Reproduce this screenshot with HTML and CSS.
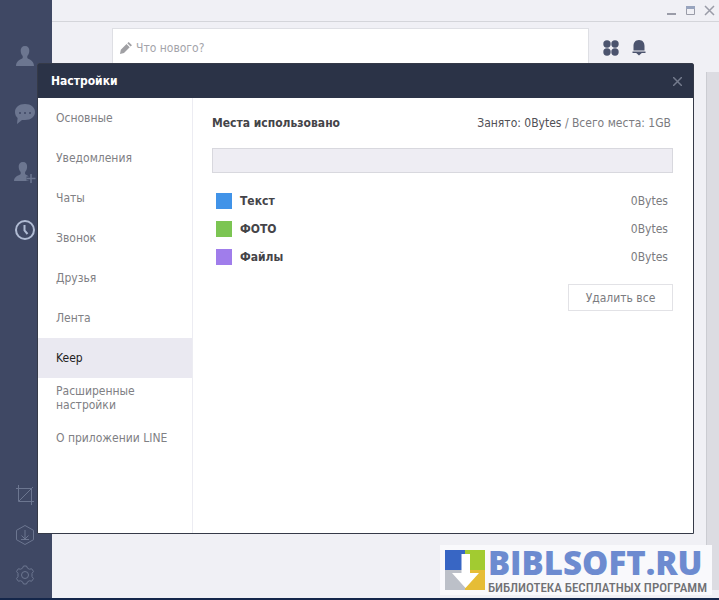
FILE: index.html
```html
<!DOCTYPE html>
<html lang="ru">
<head>
    <meta charset="UTF-8">
    <meta name="viewport" content="width=device-width, initial-scale=1.0">
    <title>Настройки</title>
    <link rel="stylesheet" href="styles.css">
</head>
<body>
    <div class="app">
        <nav class="sidebar">
            <div class="sidebar-top">
                <button class="side-button" aria-label="Друзья">
                    <svg width="20" height="22" viewBox="0 0 20 22"><path fill="currentColor" d="M10 1c3 0 4.500 2 4.300 5-.1 2-.9 4-2 5v2c1 1.300 6.700 2 6.700 8H1c0-6 5.700-6.700 6.700-8v-2c-1.100-1-1.900-3-2-5C5.500 3 7 1 10 1z"/></svg>
                </button>
                <button class="side-button" aria-label="Чаты">
                    <svg width="22" height="22" viewBox="0 0 22 22"><path fill="currentColor" d="M11 1c6 0 10 3.500 10 8s-4 8-10 8H8l-5 4 .6-6C2 13.500 1 11.500 1 9c0-4.500 4-8 10-8z"/><g fill="#3f4864"><circle cx="6" cy="10" r="1"/><circle cx="11" cy="10" r="1"/><circle cx="16" cy="10" r="1"/></g></svg>
                </button>
                <button class="side-button" aria-label="Добавить друзей">
                    <svg width="22" height="22" viewBox="0 0 22 22"><path fill="currentColor" d="M9 1c3 0 4.300 2 4.100 5-.1 2-.9 4-2 5v2c.5.800 2 1.300 3.400 2.200V20H0c0-5 5.700-5.700 6.700-7v-2c-1.100-1-1.900-3-2-5C4.500 3 6 1 9 1z"/><path d="M17 13v9M12.500 17.500h9" stroke="#3f4864" stroke-width="4"/><path d="M17 13v9M12.500 17.500h9" stroke="currentColor" stroke-width="1.500"/></svg>
                </button>
                <button class="side-button active" aria-label="Лента">
                    <svg width="22" height="22" viewBox="0 0 22 22" fill="none" stroke="currentColor" stroke-width="2"><circle cx="11" cy="11" r="9"/><path d="M10.500 6v5.500l3 3.500"/></svg>
                </button>
            </div>
            <div class="sidebar-bottom">
                <button class="side-button" aria-label="Снимок экрана">
                    <svg width="20" height="20" viewBox="0 0 20 20" fill="none" stroke="currentColor"><path d="M3.500 0v16.500H19M1 3.500h15.500V20M4 16L18 2"/></svg>
                </button>
                <button class="side-button" aria-label="Keep">
                    <svg width="20" height="22" viewBox="0 0 20 22" fill="none" stroke="currentColor"><path d="M10 1.500l8.500 4.800v9.400L10 20.500l-8.500-4.800V6.300zM10 6v9M6.500 11.500L10 15l3.500-3.500M6 15.500h8"/></svg>
                </button>
                <button class="side-button" aria-label="Настройки">
                    <svg width="20" height="20" viewBox="0 0 20 20" fill="none" stroke="currentColor"><path d="M7.500 3.200L8.500 1h3l1 2.200 1.800 1 2.400-.4 1.800 2.600-1.500 2v3.200l1.500 2-1.800 2.600-2.400-.4-1.800 1-1 2.200h-3l-1-2.200-1.800-1-2.400.4-1.800-2.600 1.500-2V8.400l-1.500-2 1.800-2.600 2.400.4z"/><circle cx="10" cy="10" r="3.500"/></svg>
                </button>
            </div>
        </nav>

        <main class="main">
            <div class="titlebar">
                <button class="window-button" aria-label="Свернуть">
                    <svg width="11" height="11" viewBox="0 0 11 11"><path d="M1 9h9" stroke="currentColor" stroke-width="2"/></svg>
                </button>
                <button class="window-button" aria-label="Развернуть">
                    <svg width="11" height="11" viewBox="0 0 11 11"><path d="M1.500 1.500h8v8h-8z" fill="none" stroke="currentColor"/><path fill="#98a4be" d="M1 1h9v3H1z"/></svg>
                </button>
                <button class="window-button" aria-label="Закрыть">
                    <svg width="11" height="11" viewBox="0 0 11 11"><path d="M1 1l9 9M10 1l-9 9" stroke="currentColor" stroke-width="1.500"/></svg>
                </button>
            </div>
            <div class="toolbar">
                <label class="post">
                    <svg width="13" height="14" viewBox="0 0 13 14"><path fill="#a0a0a4" d="M1 13l.8-4.200L7.500 3.100l3.200 3.200L5 12zM8.300 2.300L9.700 1 13 4.200l-1.500 1.400z"/></svg>
                    <input type="text" placeholder="Что нового?" aria-label="Что нового?">
                </label>
                <div class="toolbar-icons">
                    <button class="tool-button" aria-label="Меню">
                        <svg width="16" height="16" viewBox="0 0 16 16" fill="currentColor"><circle cx="4" cy="4" r="3.700"/><circle cx="12" cy="4" r="3.700"/><circle cx="4" cy="12" r="3.700"/><circle cx="12" cy="12" r="3.700"/></svg>
                    </button>
                    <button class="tool-button" aria-label="Уведомления">
                        <svg width="14" height="16" viewBox="0 0 14 16" fill="currentColor"><path d="M7 0c4 0 5.500 3 5.500 6v4.500h-11V6C1.500 3 3 0 7 0zM.5 11.500h13V13H9.800L7 15.500 4.200 13H.5z"/></svg>
                    </button>
                </div>
            </div>
            <div class="feed"></div>
        </main>

        <section class="dialog" role="dialog" aria-labelledby="dialog-title">
            <header class="dialog-header">
                <h1 id="dialog-title">Настройки</h1>
                <button class="dialog-close" aria-label="Закрыть">
                    <svg width="9" height="9" viewBox="0 0 9 9"><path d="M0 0l9 9M9 0L0 9" stroke="currentColor" stroke-width="1.500"/></svg>
                </button>
            </header>
            <div class="dialog-body">
                <nav class="menu">
                    <a href="#">Основные</a>
                    <a href="#">Уведомления</a>
                    <a href="#">Чаты</a>
                    <a href="#">Звонок</a>
                    <a href="#">Друзья</a>
                    <a href="#">Лента</a>
                    <a href="#" class="selected">Keep</a>
                    <a href="#">Расширенные настройки</a>
                    <a href="#">О приложении LINE</a>
                </nav>
                <div class="content">
                    <div class="usage">
                        <h2>Места использовано</h2>
                        <p><span class="used">Занято: 0Bytes</span> / Всего места: 1GB</p>
                    </div>
                    <progress class="bar" value="0" max="1" aria-label="Места использовано"></progress>
                    <ul class="legend">
                        <li><i class="swatch blue"></i><b>Текст</b><span>0Bytes</span></li>
                        <li><i class="swatch green"></i><b>ФОТО</b><span>0Bytes</span></li>
                        <li><i class="swatch purple"></i><b>Файлы</b><span>0Bytes</span></li>
                    </ul>
                    <button class="delete-all">Удалить все</button>
                </div>
            </div>
        </section>

        <div class="watermark">
            <svg width="40" height="40" viewBox="0 0 40 40"><path fill="#3866c4" d="M0 0h20v20H0z"/><path fill="#a2cb31" d="M20 0h20v20H20z"/><path fill="#bcc0c8" d="M0 20h20v20H0z"/><path fill="#e6bd36" d="M20 20h20v20H20z"/><path fill="#fff" d="M16.500 4h8.500v19h9L20.500 38 7 23h9.500z"/></svg>
            <div class="watermark-text">
                <span class="site">BIBLSOFT.RU</span>
                <span class="slogan">БИБЛИОТЕКА БЕСПЛАТНЫХ ПРОГРАММ</span>
            </div>
        </div>
    </div>
</body>
</html>
```

FILE: styles.css
```css
* {
    box-sizing: border-box;
}
body {
    margin: 0;
    font-family: "DejaVu Sans Condensed", "DejaVu Sans", sans-serif;
    font-size: 12px;
    line-height: 14px;
    color: #7b7b80;
}
button {
    padding: 0;
    border: none;
    background: none;
    color: inherit;
    font: inherit;
    cursor: pointer;
}
svg {
    display: block;
}
h1, h2, p, ul {
    margin: 0;
    padding: 0;
}
.app {
    position: relative;
    display: flex;
    min-height: 100vh;
    background: #f0f0f5;
    border-bottom: 2px solid #14264a;
}

/* left sidebar */
.sidebar {
    display: flex;
    flex-direction: column;
    justify-content: space-between;
    width: 52px;
    padding: 44px 0 11px;
    background: #3f4864;
    color: #6c7690;
}
.sidebar-top {
    display: flex;
    flex-direction: column;
    gap: 34px;
}
.sidebar-bottom {
    display: flex;
    flex-direction: column;
    gap: 16px;
}
.side-button {
    display: flex;
    justify-content: center;
    align-items: center;
    width: 50px;
    height: 24px;
}
.side-button.active {
    color: #b0bbd3;
}

/* main window */
.main {
    display: flex;
    flex-direction: column;
    flex: 1;
}
.titlebar {
    display: flex;
    justify-content: flex-end;
    align-items: center;
    gap: 8px;
    height: 22px;
    padding-right: 4px;
    border-bottom: 1px solid #d4d5da;
    color: #9a9ca8;
}
.toolbar {
    display: flex;
    gap: 14px;
    height: 50px;
    padding: 6px 73px 0 60px;
}
.post {
    display: flex;
    flex: 1;
    align-items: center;
    gap: 4px;
    height: 40px;
    padding-left: 6px;
    background: #fff;
    border: 1px solid #dedfe4;
}
.post input {
    flex: 1;
    padding: 0;
    border: none;
    outline: none;
    font: inherit;
}
.post input::placeholder {
    color: #a4a4aa;
}
.toolbar-icons {
    display: flex;
    align-items: center;
    gap: 13px;
    height: 40px;
    color: #4c546e;
}
.feed {
    flex: 1;
    width: 13px;
    margin: 0 0 8px auto;
    background: #dcdce2;
    border-left: 1px solid #cbccd2;
}

/* settings dialog */
.dialog {
    position: absolute;
    top: 63px;
    right: 25px;
    bottom: 64px;
    left: 37px;
    display: flex;
    flex-direction: column;
    background: #fff;
    border: 1px solid #353a48;
    border-radius: 2px 2px 0 0;
}
.dialog-header {
    display: flex;
    justify-content: space-between;
    align-items: center;
    height: 34px;
    padding: 0 11px 0 13px;
    background: #2b3347;
    color: #737a8c;
}
.dialog-header h1 {
    color: #fff;
    font-size: 12px;
}
.dialog-body {
    display: flex;
    flex: 1;
}
.menu {
    width: 155px;
    border-right: 1px solid #ececf2;
}
.menu a {
    display: flex;
    align-items: center;
    height: 40px;
    padding: 0 40px 0 18px;
    color: #808084;
    text-decoration: none;
}
.menu a:last-child {
    padding-right: 0;
}
.menu .selected {
    background: #eae9f1;
    color: #222;
}
.content {
    display: flex;
    flex-direction: column;
    flex: 1;
    padding: 18px 20px 0 19px;
}
.usage {
    display: flex;
    justify-content: space-between;
    padding-right: 2px;
}
.usage h2 {
    color: #444448;
    font-size: 12px;
}
.used {
    color: #505056;
}
.bar {
    width: 100%;
    height: 25px;
    margin: 18px 0 14px;
    appearance: none;
    background: #eeedf3;
    border: 1px solid #d8d8de;
}
.bar::-webkit-progress-bar {
    background: #eeedf3;
}
.bar::-webkit-progress-value {
    background: #3d92ea;
}
.legend {
    padding: 0 5px 0 4px;
    list-style: none;
}
.legend li {
    display: flex;
    align-items: center;
    gap: 8px;
    height: 28px;
}
.legend b {
    flex: 1;
    color: #444448;
}
.swatch {
    width: 16px;
    height: 16px;
}
.blue {
    background: #4193e8;
}
.green {
    background: #7cc553;
}
.purple {
    background: #a07deb;
}
.delete-all {
    align-self: flex-end;
    width: 105px;
    height: 27px;
    margin-top: 13px;
    border: 1px solid #e2e2e6;
}

/* site badge over the window */
.watermark {
    position: absolute;
    right: 7px;
    bottom: 3px;
    display: flex;
    align-items: center;
    gap: 3px;
    padding: 0 5px;
    background: #f9f9fc;
}
.watermark-text {
    display: flex;
    flex-direction: column;
    white-space: nowrap;
}
.site {
    color: #6d8bd0;
    font-family: "Open Sans", sans-serif;
    font-size: 33px;
    font-weight: 800;
    line-height: 36px;
}
.slogan {
    color: #707074;
    font-family: "Liberation Sans Narrow", "Roboto Condensed", Roboto, sans-serif;
    font-size: 13px;
    font-weight: 500;
    line-height: 14px;
}
```
